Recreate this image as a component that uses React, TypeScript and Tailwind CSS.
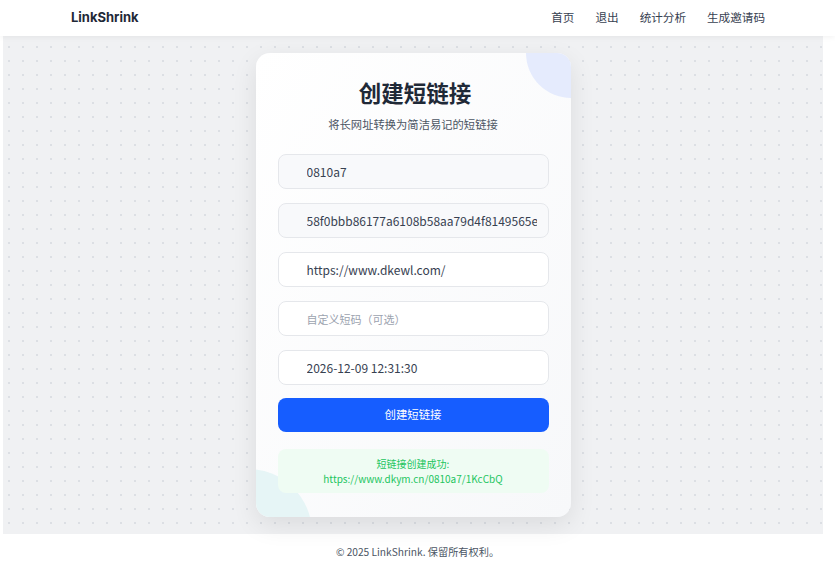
const fieldBase =
  "h-[35px] w-full rounded-lg border border-[#e5e7eb] pl-7 pr-[11px] text-[12px] text-[#374151] outline-none placeholder:text-[11px] placeholder:text-[#9ca3af]";

const Header = () => (
  <header className="relative z-10 flex h-9 items-center justify-between bg-white pl-[71px] pr-[70px] shadow-[0_1px_6px_rgba(0,0,0,0.06)]">
    <span className="font-['Inter',sans-serif] text-[13px] font-bold text-[#1f2937]">LinkShrink</span>
    <nav className="flex items-center gap-[21px] text-[11.6px] text-[#374151]">
      <a href="#">首页</a>
      <a href="#">退出</a>
      <a href="#">统计分析</a>
      <a href="#">生成邀请码</a>
    </nav>
  </header>
);

const ShortenCard = () => (
  <div className="relative w-[315px] overflow-hidden rounded-[14px] bg-gradient-to-br from-white to-[#f7f8fa] px-[22px] pt-[23px] pb-[24px] shadow-[0_8px_26px_rgba(0,0,0,0.09)]">
    <div className="absolute -top-[45px] -right-[45px] h-[90px] w-[90px] rounded-full bg-[#e5ebfd]" />
    <div className="absolute -bottom-[80px] -left-[72px] h-[128px] w-[128px] rounded-full bg-[#e6f5f6]" />

    <div className="relative">
      <h1 className="pl-1 text-center text-[22.5px] leading-8 font-bold text-[#1f2937]">创建短链接</h1>
      <p className="mt-[6px] text-center text-[11.3px] leading-5 text-[#4b5563]">将长网址转换为简洁易记的短链接</p>

      <form className="mt-5 flex flex-col gap-[14px]">
        <input className={`${fieldBase} bg-[#f8f9fb]`} value="0810a7" readOnly />
        <input className={`${fieldBase} bg-[#f8f9fb]`} value="58f0bbb86177a6108b58aa79d4f8149565e2a1c" readOnly />
        <input className={`${fieldBase} bg-white`} defaultValue="https://www.dkewl.com/" />
        <input className={`${fieldBase} bg-white`} placeholder="自定义短码（可选）" />
        <input className={`${fieldBase} bg-white`} defaultValue="2026-12-09 12:31:30" />
        <button
          type="button"
          className="-mt-px h-[34px] w-full rounded-lg bg-[#165dff] text-[11.4px] text-white"
        >
          创建短链接
        </button>
      </form>

      <div className="mt-[17px] rounded-lg bg-[#effcf3] py-[7px] text-center text-[10px] leading-[15px] text-[#22c55e]">
        <div>短链接创建成功:</div>
        <div>https://www.dkym.cn/0810a7/1KcCbQ</div>
      </div>
    </div>
  </div>
);

export default function App() {
  return (
    <div className="min-h-[576px] bg-white font-['Noto_Sans_CJK_SC','Noto_Sans',sans-serif]">
      <Header />
      <main className="ml-[3px] mr-[12px] flex justify-center bg-[#f0f1f3] bg-[radial-gradient(circle,#dcdfe4_1px,transparent_1.2px)] bg-[length:14px_14px] bg-[position:-1px_4px] py-[17px]">
        <ShortenCard />
      </main>
      <footer className="py-[10px] text-center text-[10.2px] text-[#4b5563]">
        © 2025 LinkShrink. 保留所有权利。
      </footer>
    </div>
  );
}
